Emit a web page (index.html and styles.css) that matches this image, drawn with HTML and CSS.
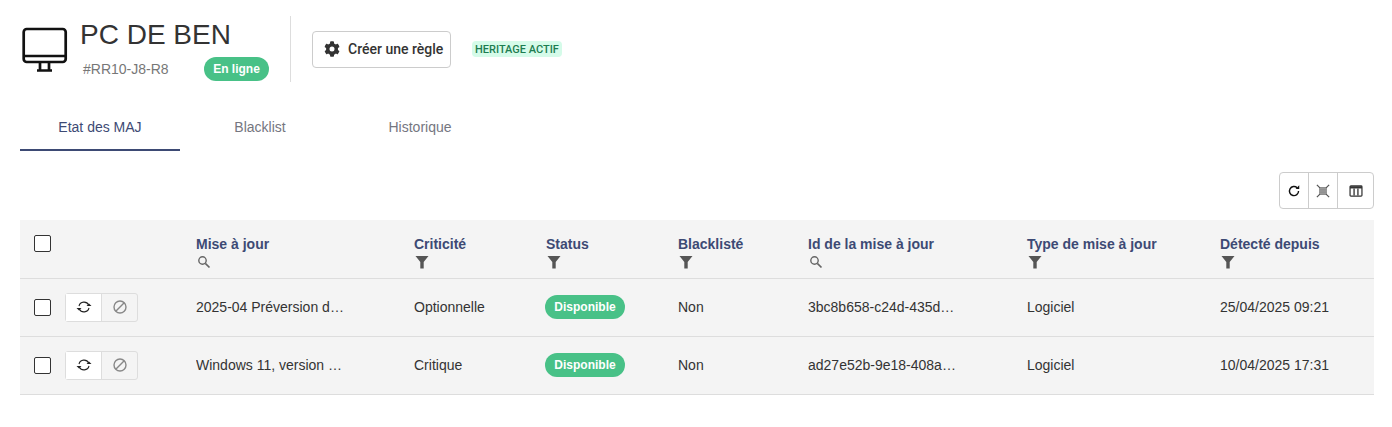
FILE: index.html
```html
<!DOCTYPE html>
<html lang="en">

<head>
    <meta charset="UTF-8">
    <title>PC DE BEN</title>
    <link rel="stylesheet" href="styles.css">
</head>

<body>
    <header class="device-header">
        <svg class="device-icon" viewBox="0 0 48 48" fill="none" stroke="#111" stroke-width="2.7">
            <rect x="3.700" y="3" width="42" height="33" rx="3"/>
            <path d="M3.700 30h42"/>
            <path d="M20 36v8M29 36v8M17 44.500h15"/>
        </svg>
        <div class="device-info">
            <h1 class="device-name">PC DE BEN</h1>
            <div class="device-meta">
                <span class="device-ref">#RR10-J8-R8</span>
                <span class="pill pill-online">En ligne</span>
            </div>
        </div>
        <div class="divider"></div>
        <button class="rule-button">
            <svg class="gear" viewBox="0 0 512 512" fill="#333">
                <path d="M487 316l-42-25a190 190 0 0 0 0-70l42-25c5-3 7-9 5-14-11-35-30-67-54-93-4-4-10-5-15-2l-42 24a190 190 0 0 0-61-35V28c0-6-4-11-9-12-36-8-73-8-108 0-6 1-9 6-9 12v48a190 190 0 0 0-61 35L91 87c-5-3-11-2-15 2-24 26-43 58-54 93-2 5 0 11 5 14l42 25a190 190 0 0 0 0 70l-42 25c-5 3-7 9-5 14 11 35 30 67 54 93 4 4 10 5 15 2l42-24a190 190 0 0 0 61 35v48c0 6 4 11 9 12 36 8 73 8 108 0 6-1 9-6 9-12v-48a190 190 0 0 0 61-35l42 24c5 3 11 2 15-2 24-26 43-58 54-93 2-5 0-11-5-14zM256 336a80 80 0 1 1 0-160 80 80 0 0 1 0 160z"/>
            </svg>
            Créer une règle
        </button>
        <span class="inherit-tag">HERITAGE ACTIF</span>
    </header>

    <nav class="tabs">
        <a class="tab active">Etat des MAJ</a>
        <a class="tab">Blacklist</a>
        <a class="tab">Historique</a>
    </nav>

    <div class="toolbar">
        <div class="tool-group">
            <button class="tool">
                <svg viewBox="0 0 16 16" fill="none" stroke="#111" stroke-width="1.6">
                    <path d="M13.200 8a5.200 5.200 0 1 1-1.600-3.700"/>
                    <path d="M14 1.500v4.200H9.800z" fill="#111" stroke="none"/>
                </svg>
            </button>
            <button class="tool">
                <svg viewBox="0 0 16 16" fill="none">
                    <rect x="3.500" y="3.500" width="9" height="9" fill="#8a8a8a"/>
                    <path d="M3.500 5.500h9M3.500 8h9M3.500 10.500h9" stroke="#aaa" stroke-width=".8"/>
                    <path d="M1 1l3.500 3.500M15 1l-3.500 3.500M1 15l3.500-3.500M15 15l-3.500-3.500" stroke="#555" stroke-width="1.400"/>
                </svg>
            </button>
            <button class="tool tool-wide">
                <svg viewBox="0 0 16 16" fill="none">
                    <rect x="1.200" y="2.200" width="13.600" height="11.600" rx="1" stroke="#333" stroke-width="1.400"/>
                    <path d="M1.200 3.800h13.600" stroke="#333" stroke-width="2.600"/>
                    <path d="M5.800 5v8M10.200 5v8" stroke="#333" stroke-width="1.500"/>
                </svg>
            </button>
        </div>
    </div>

    <table class="updates">
        <colgroup>
            <col class="col-select">
            <col class="col-title">
            <col class="col-short">
            <col class="col-short">
            <col class="col-black">
            <col class="col-id">
            <col class="col-type">
            <col class="col-date">
        </colgroup>
        <thead>
            <tr>
                <th class="select-head"><span class="checkbox"></span></th>
                <th>Mise à jour<svg class="search" viewBox="0 0 14 14"><use href="#search-icon"/></svg></th>
                <th>Criticité<svg class="filter" viewBox="0 0 14 14"><use href="#filter-icon"/></svg></th>
                <th>Status<svg class="filter" viewBox="0 0 14 14"><use href="#filter-icon"/></svg></th>
                <th>Blacklisté<svg class="filter" viewBox="0 0 14 14"><use href="#filter-icon"/></svg></th>
                <th>Id de la mise à jour<svg class="search" viewBox="0 0 14 14"><use href="#search-icon"/></svg></th>
                <th>Type de mise à jour<svg class="filter" viewBox="0 0 14 14"><use href="#filter-icon"/></svg></th>
                <th>Détecté depuis<svg class="filter" viewBox="0 0 14 14"><use href="#filter-icon"/></svg></th>
            </tr>
        </thead>
        <tbody>
            <tr>
                <td>
                    <div class="row-select">
                        <span class="checkbox"></span>
                        <div class="row-actions">
                            <button class="row-btn"><svg viewBox="0 0 16 16"><use href="#sync-icon"/></svg></button>
                            <button class="row-btn muted"><svg viewBox="0 0 16 16"><use href="#ban-icon"/></svg></button>
                        </div>
                    </div>
                </td>
                <td><span class="clip clip-title">2025-04 Préversion de la mise à jour cumulative</span></td>
                <td>Optionnelle</td>
                <td><span class="pill pill-status">Disponible</span></td>
                <td>Non</td>
                <td><span class="clip clip-id">3bc8b658-c24d-435d-9f1e-1a7d</span></td>
                <td>Logiciel</td>
                <td>25/04/2025 09:21</td>
            </tr>
            <tr>
                <td>
                    <div class="row-select">
                        <span class="checkbox"></span>
                        <div class="row-actions">
                            <button class="row-btn"><svg viewBox="0 0 16 16"><use href="#sync-icon"/></svg></button>
                            <button class="row-btn muted"><svg viewBox="0 0 16 16"><use href="#ban-icon"/></svg></button>
                        </div>
                    </div>
                </td>
                <td><span class="clip clip-title">Windows 11, version 24H2 mise à jour</span></td>
                <td>Critique</td>
                <td><span class="pill pill-status">Disponible</span></td>
                <td>Non</td>
                <td><span class="clip clip-id">ad27e52b-9e18-408a-b7c3-55e1</span></td>
                <td>Logiciel</td>
                <td>10/04/2025 17:31</td>
            </tr>
        </tbody>
    </table>

    <!-- shared icons -->
    <svg class="sprite">
        <symbol id="search-icon" viewBox="0 0 14 14">
            <circle cx="5.500" cy="5.500" r="3.700" fill="none" stroke="#666" stroke-width="1.400"/>
            <path d="M8.300 8.300l4.200 4.200" stroke="#666" stroke-width="1.700"/>
        </symbol>
        <symbol id="filter-icon" viewBox="0 0 14 14">
            <path d="M.5 1h13L8.700 7v6.500H5.300V7z" fill="#555"/>
        </symbol>
        <symbol id="sync-icon" viewBox="0 0 16 16">
            <path d="M3 7a5.200 5.200 0 0 1 9.700-1M13 9a5.200 5.200 0 0 1-9.700 1" fill="none" stroke="#222" stroke-width="1.100"/>
            <path d="M10.500 7h5l-2.500-2.600zM.5 9h5L3 11.600z" fill="#222"/>
        </symbol>
        <symbol id="ban-icon" viewBox="0 0 16 16">
            <circle cx="8" cy="8" r="6" fill="none" stroke="#888" stroke-width="1.400"/>
            <path d="M3.800 12.200l8.400-8.400" stroke="#888" stroke-width="1.400"/>
        </symbol>
    </svg>
</body>

</html>
```

FILE: styles.css
```css
body {
    font-family: "Liberation Sans", Arial, sans-serif;
    margin: 0;
    padding: 0 18px 0 20px;
    background-color: white;
    color: #333;
    font-size: 14px;
}

button {
    font-family: inherit;
    cursor: pointer;
}

/* header */
.device-header {
    display: flex;
    align-items: center;
    height: 66px;
    padding-top: 16px;
}

.device-icon {
    width: 48px;
    height: 48px;
    flex: none;
    align-self: flex-start;
    margin-top: 10px;
}

.device-info {
    margin-left: 12px;
    width: 189px;
    flex: none;
    align-self: flex-start;
}

.device-name {
    margin: 3px 0 0;
    font-size: 28px;
    line-height: 32px;
    font-weight: 400;
    color: #333;
}

.device-meta {
    display: flex;
    align-items: center;
    justify-content: space-between;
    margin-top: 6px;
    padding-left: 3px;
}

.device-ref {
    font-size: 14px;
    color: #777;
}

.pill {
    display: inline-flex;
    align-items: center;
    justify-content: center;
    background-color: #48c187;
    color: white;
    font-weight: 700;
    font-size: 12px;
    border-radius: 12px;
}

.pill-online {
    width: 65px;
    height: 24px;
}

.divider {
    width: 1px;
    height: 66px;
    background-color: #ddd;
    margin-left: 21px;
    flex: none;
}

.rule-button {
    display: flex;
    align-items: center;
    gap: 8px;
    margin-left: 21px;
    width: 139px;
    height: 37px;
    padding: 0 0 0 11px;
    background-color: white;
    border: 1px solid #ccc;
    border-radius: 4px;
    font-family: Roboto, sans-serif;
    font-weight: 500;
    font-size: 14px;
    color: #333;
}

.gear {
    width: 16px;
    height: 16px;
}

.inherit-tag {
    margin-left: 21px;
    padding: 0 3px;
    height: 16px;
    line-height: 17px;
    background-color: #d5fbe9;
    color: #1d7d50;
    font-family: Roboto, sans-serif;
    font-weight: 500;
    font-size: 11px;
    white-space: nowrap;
    border-radius: 4px;
}

/* tabs */
.tabs {
    display: flex;
    margin-top: 21px;
}

.tab {
    width: 160px;
    height: 46px;
    line-height: 48px;
    text-align: center;
    font-size: 14px;
    color: #75767f;
}

.tab.active {
    color: #3d4a74;
    border-bottom: 2px solid #3d4a74;
}

/* toolbar */
.toolbar {
    display: flex;
    justify-content: flex-end;
    margin-top: 21px;
}

.tool-group {
    display: flex;
    height: 37px;
    border: 1px solid #ccc;
    border-radius: 4px;
    box-sizing: border-box;
}

.tool {
    width: 29px;
    padding: 0;
    background: none;
    border: none;
    border-left: 1px solid #ccc;
    display: flex;
    align-items: center;
    justify-content: center;
}

.tool:first-child {
    border-left: none;
    width: 28px;
}

.tool-wide {
    width: 36px;
}

.tool svg {
    width: 14px;
    height: 14px;
}

/* table */
.updates {
    width: 100%;
    margin-top: 11px;
    table-layout: fixed;
    border-collapse: collapse;
    background-color: #f4f4f4;
}

.col-select { width: 176px; }
.col-title { width: 218px; }
.col-short { width: 132px; }
.col-black { width: 130px; }
.col-id { width: 219px; }
.col-type { width: 193px; }

th,
td {
    padding: 0;
    text-align: left;
    border-bottom: 1px solid #ddd;
    box-sizing: border-box;
}

th {
    height: 58px;
    font-size: 14px;
    font-weight: 700;
    color: #3d4a74;
    vertical-align: top;
    padding-top: 16px;
}

th svg {
    display: block;
    margin-top: 3px;
}

.search {
    width: 14px;
    height: 14px;
    margin-left: 1px;
}

.filter {
    width: 14px;
    height: 14px;
    margin-left: 1px;
}

th.select-head {
    padding: 15px 0 0 14px;
}

td {
    height: 58px;
    font-size: 14px;
    color: #333;
}

.checkbox {
    display: block;
    width: 15px;
    height: 15px;
    border: 1px solid #333;
    border-radius: 2px;
    background-color: white;
}

.row-select {
    display: flex;
    align-items: center;
    padding-left: 14px;
}

.row-actions {
    display: flex;
    margin-left: 14px;
    height: 29px;
    box-sizing: border-box;
    border: 1px solid #ddd;
    border-radius: 3px;
}

.row-btn {
    width: 35px;
    padding: 0;
    border: none;
    background-color: white;
    display: flex;
    align-items: center;
    justify-content: center;
}

.row-btn.muted {
    width: 36px;
    background: none;
    border-left: 1px solid #ddd;
}

.row-btn svg {
    width: 16px;
    height: 16px;
}

.clip {
    display: block;
    overflow: hidden;
    white-space: nowrap;
    text-overflow: ellipsis;
}

.clip-title {
    width: 148px;
}

.clip-id {
    width: 150px;
}

.pill-status {
    width: 80px;
    height: 24px;
    margin-left: -1px;
}

.sprite {
    display: none;
}
```
